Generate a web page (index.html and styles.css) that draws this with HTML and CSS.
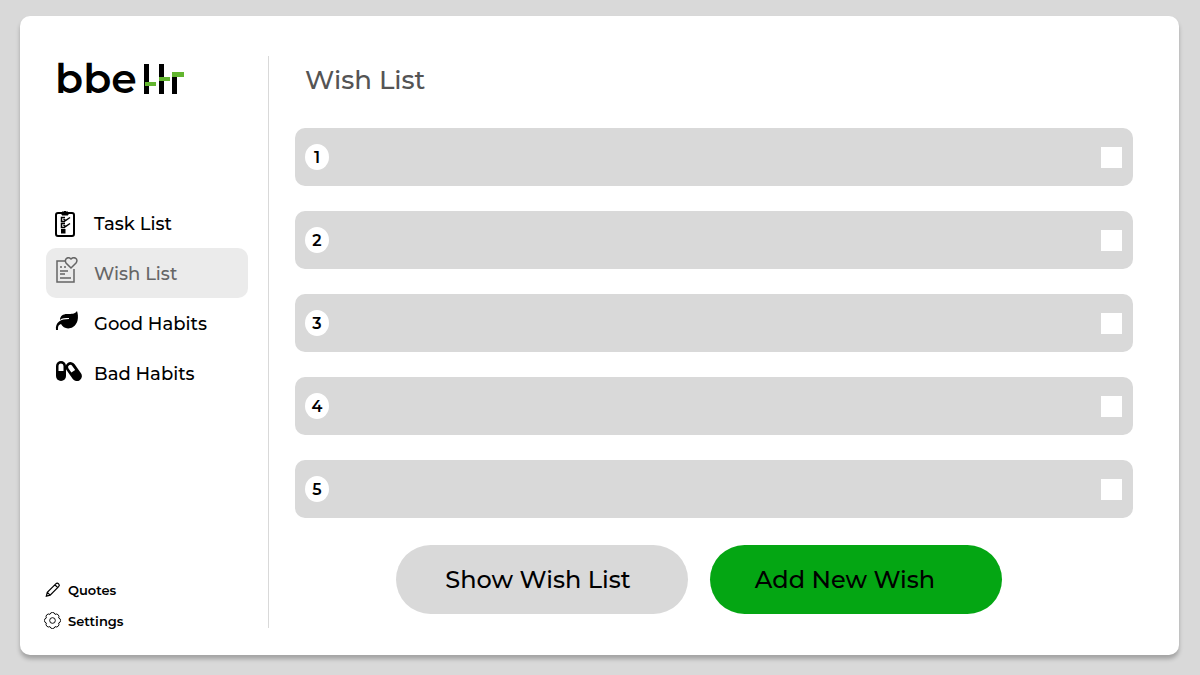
FILE: index.html
```html
<!DOCTYPE html>
<html lang="en">
<head>
<meta charset="utf-8">
<meta name="viewport" content="width=device-width, initial-scale=1">
<title>Wish List</title>
<link rel="stylesheet" href="styles.css">
</head>
<body>
<div class="app">
  <aside class="sidebar">
    <a class="logo" href="#" aria-label="bbellr">
      <span class="logo-text">bbe</span>
      <svg class="logo-bars" viewBox="0 0 40 30" width="40" height="30" aria-hidden="true">
        <path fill="#000" d="M0 0h5v30H0zM15 0h5v30h-5zM28 13h5v17h-5z"/>
        <path fill="#62b52f" d="M1 18h11v4H1zM15 13h11v4H15zM28 8h12v5H28z"/>
      </svg>
    </a>
    <nav class="nav">
      <a class="nav-item" href="#">
        <svg class="nav-icon" viewBox="0 0 28 32" aria-hidden="true">
          <rect x="2" y="6" width="18" height="23" rx="2" fill="none" stroke="#000" stroke-width="2"/>
          <path d="M8 8V5h2l1-1 1 1h2v3z" stroke="#000"/>
          <path d="M11 10.500H7.500v4H11M11 16.500H7.500v4H11M9.500 12l2 1.500 4.500-3M9.500 18l2 1.500 4.500-3" fill="none" stroke="#000" stroke-width="1.5"/>
          <path d="M7 22h4.500v4.500H7z"/>
        </svg>
        <span>Task List</span>
      </a>
      <a class="nav-item active" href="#" aria-current="page">
        <svg class="nav-icon" viewBox="0 0 28 32" fill="none" stroke="currentColor" stroke-width="1.5" aria-hidden="true">
          <path d="M11 4H3v21h17V12"/>
          <path d="M17 11l-5-5c-2-4 2-7 5-4 3-3 8 0 5 4z"/>
          <path d="M6 10h2m2 0h2M6 14h8M6 17h5M6 21h11"/>
        </svg>
        <span>Wish List</span>
      </a>
      <a class="nav-item" href="#">
        <svg class="nav-icon" viewBox="0 0 28 32" aria-hidden="true">
          <path d="M23 4c2 6 1 13-4 16-5 3-10 1-12-3-3 1-3 3-3 6H2c-1-8 5-11 13-11v-1c-4 0-7 0-9 2 0-4 3-6 7-6 5 0 8 0 10-3z"/>
        </svg>
        <span>Good Habits</span>
      </a>
      <a class="nav-item" href="#">
        <svg class="nav-icon" viewBox="0 0 28 32" aria-hidden="true">
          <rect x="2" y="4" width="10" height="20" rx="5"/>
          <path fill="#fff" d="M4.500 14V9a2.500 2.500 0 0 1 5 0v5z"/>
          <g transform="rotate(-35 20 15)">
            <rect x="15" y="4" width="10" height="21" rx="5"/>
            <path fill="#fff" d="M17.500 14V9a2.300 2.300 0 0 1 4.600 0v5z"/>
          </g>
        </svg>
        <span>Bad Habits</span>
      </a>
    </nav>
    <nav class="links">
      <a class="link" href="#">
        <svg class="link-icon" viewBox="0 0 18 18" fill="none" stroke="#000" stroke-width="1.3" aria-hidden="true">
          <path d="M2.500 16l1-4 9-9q1.500-1.500 3 0 1.500 1.500 0 3l-9 9zM11.500 4l3 3M3.500 12l3 3"/>
        </svg>
        <span>Quotes</span>
      </a>
      <a class="link" href="#">
        <svg class="link-icon" viewBox="0 0 18 18" fill="none" stroke="#000" aria-hidden="true">
          <path d="M15.500 6.300a2.800 2.800 0 0 1 0 5.400 2.800 2.800 0 0 1-3.800 3.800 2.800 2.800 0 0 1-5.400 0 2.800 2.800 0 0 1-3.800-3.800 2.800 2.800 0 0 1 0-5.400 2.800 2.800 0 0 1 3.800-3.800 2.800 2.800 0 0 1 5.400 0 2.800 2.800 0 0 1 3.800 3.800z"/>
          <circle cx="9" cy="9" r="3"/>
        </svg>
        <span>Settings</span>
      </a>
    </nav>
  </aside>
  <main class="main">
    <h1 class="title">Wish List</h1>
    <ol class="wishes">
      <li class="wish"><label class="number" for="wish-1">1</label><input class="check" type="checkbox" id="wish-1"></li>
      <li class="wish"><label class="number" for="wish-2">2</label><input class="check" type="checkbox" id="wish-2"></li>
      <li class="wish"><label class="number" for="wish-3">3</label><input class="check" type="checkbox" id="wish-3"></li>
      <li class="wish"><label class="number" for="wish-4">4</label><input class="check" type="checkbox" id="wish-4"></li>
      <li class="wish"><label class="number" for="wish-5">5</label><input class="check" type="checkbox" id="wish-5"></li>
    </ol>
    <div class="actions">
      <button class="button" type="button">Show Wish List</button>
      <button class="button primary" type="button">Add New Wish</button>
    </div>
  </main>
</div>
</body>
</html>
```
FILE: styles.css
```css
* {
  box-sizing: border-box;
}

body {
  margin: 0;
  min-height: 100vh;
  display: flex;
  padding: 16px 21px 20px 20px;
  background: #d9d9d9;
  color: #000;
  font-family: Montserrat, Inter, sans-serif;
  font-weight: 500;
}

a {
  color: inherit;
  text-decoration: none;
}

.app {
  flex: 1;
  display: flex;
  padding: 40px 46px 27px 24px;
  background: #fff;
  border-radius: 10px;
  box-shadow: 0 4px 4px rgba(0, 0, 0, 0.25);
}

.sidebar {
  flex: 0 0 225px;
  display: flex;
  flex-direction: column;
  padding-right: 20px;
  border-right: 1px solid #d9d9d9;
}

.logo {
  display: flex;
  align-items: flex-end;
  gap: 7px;
  height: 38px;
  padding-left: 11px;
}

.logo-text {
  font-size: 41px;
  font-weight: 600;
  line-height: 31px;
}

.nav {
  margin-top: 104px;
  padding-left: 2px;
}

.nav-item {
  display: flex;
  align-items: center;
  gap: 12px;
  height: 50px;
  padding-left: 8px;
  border-radius: 10px;
  font-size: 18px;
}

.nav-item span {
  padding-top: 2px;
}

.nav-item.active {
  background: #ebebeb;
  color: #666;
}

.nav-icon {
  width: 28px;
  height: 32px;
}

.links {
  display: grid;
  gap: 13px;
  margin-top: auto;
}

.link {
  display: flex;
  align-items: center;
  gap: 7px;
  height: 18px;
  font-size: 13px;
  font-weight: 600;
}

.link span {
  padding-top: 4px;
}

.link-icon {
  width: 17px;
  height: 17px;
  margin-top: 3px;
}

.main {
  flex: 1;
  padding-left: 26px;
}

.title {
  margin: 0;
  padding: 8px 10px 0;
  color: #545454;
  font-size: 26px;
  font-weight: 500;
  line-height: 32px;
}

.wishes {
  display: grid;
  gap: 25px;
  margin: 32px 0 0;
  padding: 0;
  list-style: none;
}

.wish {
  display: flex;
  align-items: center;
  justify-content: space-between;
  height: 58px;
  padding: 0 11px 0 10px;
  background: #d9d9d9;
  border-radius: 10px;
}

.number {
  width: 24px;
  height: 26px;
  background: #fff;
  border-radius: 50%;
  font-size: 16px;
  font-weight: 600;
  line-height: 27px;
  text-align: center;
}

.check {
  appearance: none;
  width: 21px;
  height: 21px;
  margin: 0;
  background: #fff;
}

.check:checked {
  background: #04a613;
  border: 4px solid #fff;
}

.actions {
  display: flex;
  justify-content: center;
  gap: 22px;
  margin-top: 27px;
  padding-right: 30px;
}

.button {
  width: 292px;
  height: 69px;
  padding: 0 8px 0 0;
  border: 0;
  border-radius: 35px;
  background: #d9d9d9;
  color: #000;
  font: inherit;
  font-size: 24px;
  cursor: pointer;
}

.button.primary {
  padding-right: 22px;
  background: #04a613;
}
```
